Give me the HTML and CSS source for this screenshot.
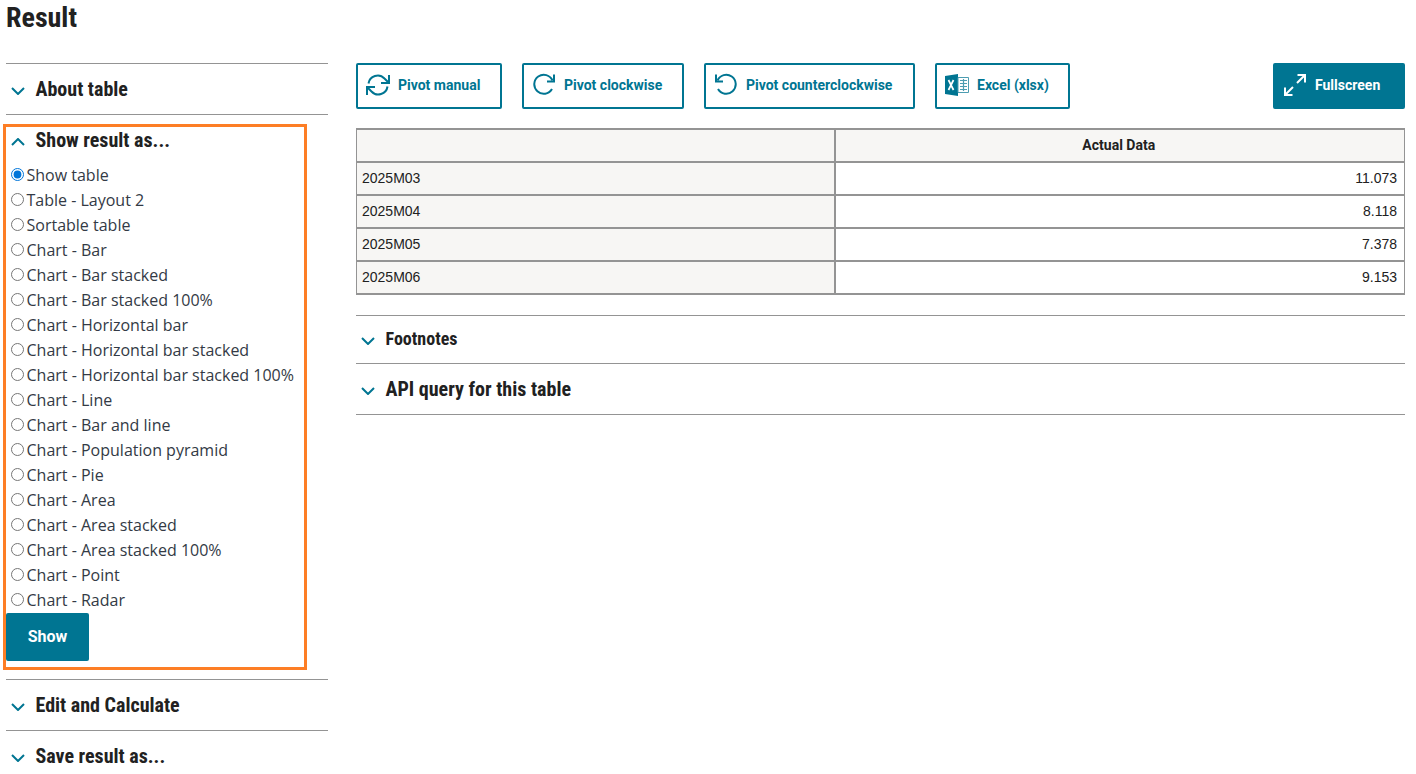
FILE: index.html
```
<!DOCTYPE html>
<html lang="en">
<head>
<meta charset="utf-8">
<title>Result</title>
<link rel="stylesheet" href="styles.css">
</head>
<body>
<svg class="defs" width="0" height="0" aria-hidden="true">
  <symbol id="down" viewBox="0 0 14 8"><path d="M1 1l6 6 6-6" fill="none" stroke="currentColor" stroke-width="2"/></symbol>
  <symbol id="up" viewBox="0 0 14 8"><path d="M1 7l6-6 6 6" fill="none" stroke="currentColor" stroke-width="2"/></symbol>
</svg>
<h1 class="title">Result</h1>
<div class="page">
  <aside class="side">
    <div class="acc acc-first"><svg class="chev"><use href="#down"/></svg><span class="acc-label">About table</span></div>
    <section class="panel">
      <div class="panel-head"><svg class="chev"><use href="#up"/></svg><span class="acc-label">Show result as...</span></div>
      <form class="options">
        <label class="opt"><input type="radio" name="v" checked><span>Show table</span></label>
        <label class="opt"><input type="radio" name="v"><span>Table - Layout 2</span></label>
        <label class="opt"><input type="radio" name="v"><span>Sortable table</span></label>
        <label class="opt"><input type="radio" name="v"><span>Chart - Bar</span></label>
        <label class="opt"><input type="radio" name="v"><span>Chart - Bar stacked</span></label>
        <label class="opt"><input type="radio" name="v"><span>Chart - Bar stacked 100%</span></label>
        <label class="opt"><input type="radio" name="v"><span>Chart - Horizontal bar</span></label>
        <label class="opt"><input type="radio" name="v"><span>Chart - Horizontal bar stacked</span></label>
        <label class="opt"><input type="radio" name="v"><span>Chart - Horizontal bar stacked 100%</span></label>
        <label class="opt"><input type="radio" name="v"><span>Chart - Line</span></label>
        <label class="opt"><input type="radio" name="v"><span>Chart - Bar and line</span></label>
        <label class="opt"><input type="radio" name="v"><span>Chart - Population pyramid</span></label>
        <label class="opt"><input type="radio" name="v"><span>Chart - Pie</span></label>
        <label class="opt"><input type="radio" name="v"><span>Chart - Area</span></label>
        <label class="opt"><input type="radio" name="v"><span>Chart - Area stacked</span></label>
        <label class="opt"><input type="radio" name="v"><span>Chart - Area stacked 100%</span></label>
        <label class="opt"><input type="radio" name="v"><span>Chart - Point</span></label>
        <label class="opt"><input type="radio" name="v"><span>Chart - Radar</span></label>
      </form>
      <button class="show" type="button">Show</button>
    </section>
    <div class="acc acc-after"><svg class="chev"><use href="#down"/></svg><span class="acc-label">Edit and Calculate</span></div>
    <div class="acc"><svg class="chev"><use href="#down"/></svg><span class="acc-label">Save result as...</span></div>
  </aside>
  <main class="main">
    <div class="toolbar">
      <button class="btn btn-manual" type="button">
        <svg class="ico" viewBox="0 0 24 24" fill="none" stroke="currentColor" stroke-width="2"><path d="M2.500 10.500A9.300 9.300 0 0 1 18.500 5.500L22 9"/><path d="M23 2v8h-8"/><path d="M21.500 13.500A9.300 9.300 0 0 1 5.500 18.500L2 15"/><path d="M1 22v-8h8"/></svg>
        <span>Pivot manual</span>
      </button>
      <button class="btn btn-cw" type="button">
        <svg class="ico" viewBox="0 0 24 24" fill="none" stroke="currentColor" stroke-width="2"><path d="M20 16a9.500 9.500 0 1 1 .5-8.500"/><path d="M22 1.500v7h-7"/></svg>
        <span>Pivot clockwise</span>
      </button>
      <button class="btn btn-ccw" type="button">
        <svg class="ico" viewBox="0 0 24 24" fill="none" stroke="currentColor" stroke-width="2"><path d="M4 16a9.500 9.500 0 1 0-.5-8.500"/><path d="M2 1.500v7h7"/></svg>
        <span>Pivot counterclockwise</span>
      </button>
      <button class="btn btn-xls" type="button">
        <svg class="ico" viewBox="0 0 24 22"><path fill="#007592" d="M0 2 13 0v22L0 20z"/><path fill="none" stroke="#fff" stroke-width="1.700" d="M3.500 6l5 10M8.500 6l-5 10"/><path fill="#fff" stroke="#4d9db1" stroke-width="1" d="M13 3.500h10.500v15H13z"/><path fill="none" stroke="#4d9db1" stroke-width="1.200" d="M15 6.500h7M15 9.500h7M15 12.500h7M15 15.500h7M18.500 5v12"/></svg>
        <span>Excel (xlsx)</span>
      </button>
      <button class="btn btn-full" type="button">
        <svg class="ico" viewBox="0 0 24 24" fill="none" stroke="currentColor" stroke-width="2"><path d="M14 10 22 2M14.500 2H22v7.500"/><path d="M10 14 2 22M2 14.500V22h7.500"/></svg>
        <span>Fullscreen</span>
      </button>
    </div>
    <table class="data">
      <thead>
        <tr><th class="stub"></th><th>Actual Data</th></tr>
      </thead>
      <tbody>
        <tr><th class="row">2025M03</th><td>11.073</td></tr>
        <tr><th class="row">2025M04</th><td>8.118</td></tr>
        <tr><th class="row">2025M05</th><td>7.378</td></tr>
        <tr><th class="row">2025M06</th><td>9.153</td></tr>
      </tbody>
    </table>
    <div class="notes">
      <div class="note note-small"><svg class="chev"><use href="#down"/></svg><span class="acc-label">Footnotes</span></div>
      <div class="note"><svg class="chev"><use href="#down"/></svg><span class="acc-label">API query for this table</span></div>
    </div>
  </main>
</div>
</body>
</html>
```
FILE: styles.css
```
* { box-sizing: border-box; }
html, body { height: 100%; }
body {
  margin: 0;
  padding: 0 11px 0 6px;
  background: #fff;
  color: #212121;
  font-family: Roboto, "Liberation Sans", sans-serif;
  overflow: hidden;
}
.defs { position: absolute; }
.title {
  margin: 0;
  height: 63px;
  padding-top: 1px;
  font-size: 28px;
  line-height: 34px;
  font-weight: 700;
  font-stretch: 75%;
}
.page { display: flex; gap: 28px; align-items: flex-start; }
.side { width: 322px; flex: none; }
.main { flex: 1; min-width: 0; }
.acc {
  display: flex;
  align-items: center;
  height: 51px;
  border-top: 1px solid #949494;
}
.acc-first { border-bottom: 1px solid #949494; height: 52px; }
.acc-after { margin-top: 9px; }
.chev { width: 14px; height: 8px; margin: 3px 10.500px 0 5px; color: #007592; flex: none; }
.acc-label {
  font-size: 20px;
  line-height: 26px;
  font-weight: 700;
  font-stretch: 75%;
}
.panel {
  width: 304px;
  height: 546px;
  margin: 9px 0 0 -3px;
  border: 3px solid #fd7e25;
}
.panel-head { display: flex; align-items: center; height: 26px; }
.options { display: flex; flex-direction: column; margin-top: 9px; }
.opt {
  display: flex;
  align-items: center;
  height: 25px;
  font-family: "Open Sans", sans-serif;
  font-size: 16px;
  color: #333a45;
}
.opt input { width: 13px; height: 13px; margin: 0 2.500px 0 5px; flex: none; accent-color: #0075d9; }
.show {
  display: block;
  width: 83px;
  height: 48px;
  margin-top: 1px;
  padding: 0 0 2px;
  border: 0;
  border-radius: 2px;
  background: #007592;
  color: #fff;
  font: 700 16px Roboto, sans-serif;
}
.toolbar { display: flex; gap: 20px; height: 46px; }
.btn {
  display: flex;
  align-items: center;
  gap: 8px;
  height: 46px;
  padding: 0 0 2px 8px;
  background: #fff;
  border: 2px solid #007592;
  border-radius: 2px;
  color: #007592;
  font: 700 14px Roboto, sans-serif;
  white-space: nowrap;
}
.btn-manual { width: 146px; }
.btn-cw { width: 162px; }
.btn-ccw { width: 211px; }
.btn-xls { width: 135px; }
.ico { width: 24px; height: 24px; flex: none; }
.btn-full {
  width: 132px;
  margin-left: auto;
  background: #007592;
  color: #fff;
  border-color: #007592;
}
.data {
  width: 100%;
  margin-top: 19px;
  border-collapse: collapse;
  table-layout: fixed;
  font: 14px/17px "Liberation Sans", Arial, sans-serif;
  color: #212121;
}
.data th, .data td { height: 33px; padding: 0 7px 0 5px; border: 2px solid #949494; }
.data tr > :first-child { border-left-width: 1px; }
.data tr > :last-child { border-right-width: 1px; }
.data thead th { background: #f7f6f4; text-align: center; font: 700 14px/17px Roboto, sans-serif; }
.stub { width: 478px; }
.data .row { background: #f7f6f4; font-weight: 400; text-align: left; }
.data td { text-align: right; }
.notes { margin-top: 20px; border-top: 1px solid #949494; }
.note {
  display: flex;
  align-items: center;
  height: 51px;
  border-bottom: 1px solid #949494;
}
.note-small { height: 48px; }
.note-small .acc-label { font-size: 18px; margin-bottom: 2px; }
```
